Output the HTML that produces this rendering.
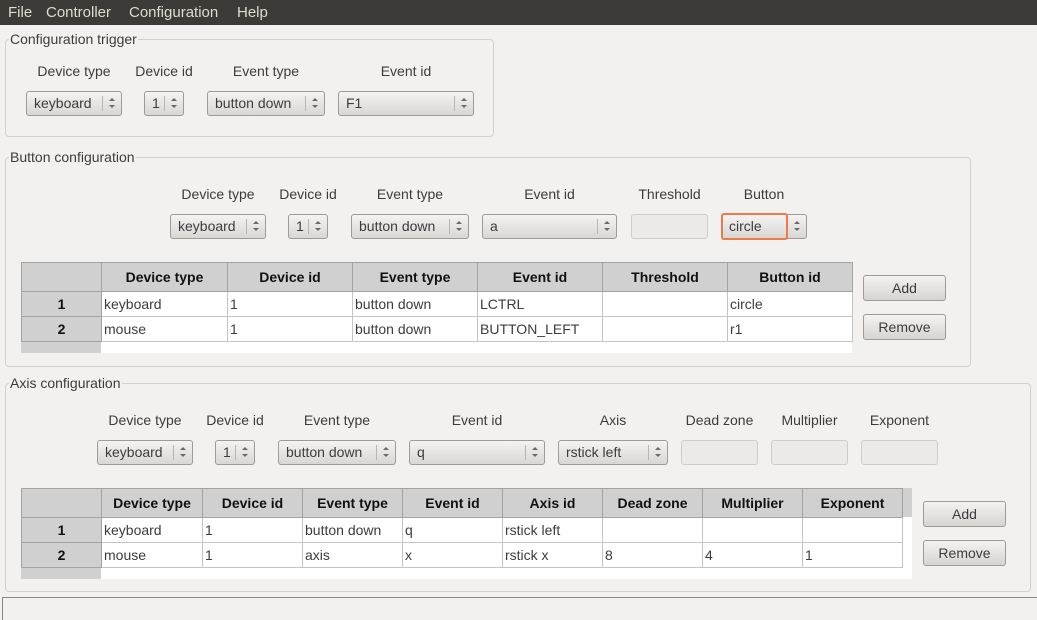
<!DOCTYPE html>
<html><head><meta charset="utf-8"><style>
*{box-sizing:border-box;margin:0;padding:0}
body{width:1037px;height:620px;background:#f2f1f0;font-family:"Liberation Sans",sans-serif;font-size:14px;color:#3c3c3c;position:relative;overflow:hidden}
.a{position:absolute}
.menu{left:0;top:0;width:1037px;height:25px;background:#3c3b37;color:#dfdbd2;font-size:15px}
.menu span{position:absolute;top:4px}
.grp{border:1px solid #d3d0cc;border-radius:4px}
.gt{background:#f2f1f0;padding:0 1px;line-height:16px}
.lbl{text-align:center;line-height:16px}
.cb{height:25px;border:1px solid #9e9b97;border-radius:3px;background:linear-gradient(#f4f3f2,#d9d7d4);line-height:23px;padding-left:7px;white-space:nowrap}
.cb i{position:absolute;right:0;top:4px;width:19px;height:15px;border-left:1px solid #b8b5b1}
.cb i:before{content:"";position:absolute;left:6px;top:2px;border:3px solid transparent;border-bottom:3px solid #6b6966;border-top:0}
.cb i:after{content:"";position:absolute;left:6px;top:9px;border:3px solid transparent;border-top:3px solid #6b6966;border-bottom:0}
.inp{height:25px;border:1px solid #d0cdc9;border-radius:3px;background:#ebeae8}
.btn{height:26px;border:1px solid #9e9b97;border-radius:3px;background:linear-gradient(#f4f3f2,#d6d4d1);text-align:center;line-height:24px}
table{position:absolute;border-collapse:collapse;table-layout:fixed;background:#fff}
td,th{border:1px solid #c4c4c4;height:25px;padding:0 2px;text-align:left;font-weight:normal;white-space:nowrap;overflow:hidden}
th{background:#d0d0d0;border-color:#a3a3a3;font-weight:bold;text-align:center;color:#111;height:29px}
td.rh{background:#d0d0d0;border-color:#a3a3a3;font-weight:bold;text-align:center;color:#111}
</style></head><body>
<div class="a menu"><span style="left:8px">File</span><span style="left:46px">Controller</span><span style="left:129px">Configuration</span><span style="left:237px">Help</span></div>

<div class="a grp" style="left:5px;top:39px;width:489px;height:98px"></div>
<div class="a gt" style="left:9px;top:31px">Configuration trigger</div>
<div class="a lbl" style="left:26px;top:63px;width:96px">Device type</div>
<div class="a lbl" style="left:128px;top:63px;width:72px">Device id</div>
<div class="a lbl" style="left:207px;top:63px;width:118px">Event type</div>
<div class="a lbl" style="left:338px;top:63px;width:136px">Event id</div>
<div class="a cb" style="left:26px;top:91px;width:96px">keyboard<i></i></div>
<div class="a cb" style="left:144px;top:91px;width:40px">1<i></i></div>
<div class="a cb" style="left:207px;top:91px;width:118px">button down<i></i></div>
<div class="a cb" style="left:338px;top:91px;width:136px">F1<i></i></div>

<div class="a grp" style="left:5px;top:157px;width:966px;height:210px"></div>
<div class="a gt" style="left:9px;top:149px">Button configuration</div>
<div class="a lbl" style="left:170px;top:186px;width:96px">Device type</div>
<div class="a lbl" style="left:272px;top:186px;width:72px">Device id</div>
<div class="a lbl" style="left:351px;top:186px;width:118px">Event type</div>
<div class="a lbl" style="left:482px;top:186px;width:135px">Event id</div>
<div class="a lbl" style="left:631px;top:186px;width:77px">Threshold</div>
<div class="a lbl" style="left:721px;top:186px;width:86px">Button</div>
<div class="a cb" style="left:170px;top:214px;width:96px">keyboard<i></i></div>
<div class="a cb" style="left:288px;top:214px;width:40px">1<i></i></div>
<div class="a cb" style="left:351px;top:214px;width:118px">button down<i></i></div>
<div class="a cb" style="left:482px;top:214px;width:135px">a<i></i></div>
<div class="a inp" style="left:631px;top:214px;width:77px"></div>
<div class="a cb" style="left:721px;top:214px;width:86px">circle<i></i></div>
<div class="a" style="left:721px;top:213px;width:67px;height:27px;border:2px solid #ee7a4c;border-radius:3px"></div>
<div class="a" style="left:21px;top:262px;width:831px;height:91px;background:#fff"></div>
<div class="a" style="left:21px;top:342px;width:80px;height:11px;background:#d0d0d0"></div>
<table style="left:21px;top:262px;width:831px">
<colgroup><col style="width:80px"><col style="width:126px"><col style="width:125px"><col style="width:125px"><col style="width:125px"><col style="width:125px"><col style="width:125px"></colgroup>
<tr><th></th><th>Device type</th><th>Device id</th><th>Event type</th><th>Event id</th><th>Threshold</th><th>Button id</th></tr>
<tr><td class="rh">1</td><td>keyboard</td><td>1</td><td>button down</td><td>LCTRL</td><td></td><td>circle</td></tr>
<tr><td class="rh">2</td><td>mouse</td><td>1</td><td>button down</td><td>BUTTON_LEFT</td><td></td><td>r1</td></tr>
</table>
<div class="a btn" style="left:863px;top:275px;width:83px">Add</div>
<div class="a btn" style="left:863px;top:314px;width:83px">Remove</div>

<div class="a grp" style="left:5px;top:383px;width:1026px;height:209px"></div>
<div class="a gt" style="left:9px;top:375px">Axis configuration</div>
<div class="a lbl" style="left:97px;top:412px;width:96px">Device type</div>
<div class="a lbl" style="left:199px;top:412px;width:72px">Device id</div>
<div class="a lbl" style="left:278px;top:412px;width:118px">Event type</div>
<div class="a lbl" style="left:409px;top:412px;width:136px">Event id</div>
<div class="a lbl" style="left:558px;top:412px;width:110px">Axis</div>
<div class="a lbl" style="left:681px;top:412px;width:77px">Dead zone</div>
<div class="a lbl" style="left:771px;top:412px;width:77px">Multiplier</div>
<div class="a lbl" style="left:861px;top:412px;width:77px">Exponent</div>
<div class="a cb" style="left:97px;top:440px;width:96px">keyboard<i></i></div>
<div class="a cb" style="left:215px;top:440px;width:40px">1<i></i></div>
<div class="a cb" style="left:278px;top:440px;width:118px">button down<i></i></div>
<div class="a cb" style="left:409px;top:440px;width:136px">q<i></i></div>
<div class="a cb" style="left:558px;top:440px;width:110px">rstick left<i></i></div>
<div class="a inp" style="left:681px;top:440px;width:77px"></div>
<div class="a inp" style="left:771px;top:440px;width:77px"></div>
<div class="a inp" style="left:861px;top:440px;width:77px"></div>
<div class="a" style="left:21px;top:488px;width:891px;height:91px;background:#fff"></div>
<div class="a" style="left:21px;top:488px;width:891px;height:29px;background:#d0d0d0"></div>
<div class="a" style="left:21px;top:567px;width:80px;height:12px;background:#d0d0d0"></div>
<table style="left:21px;top:488px;width:881px">
<colgroup><col style="width:80px"><col style="width:101px"><col style="width:100px"><col style="width:100px"><col style="width:100px"><col style="width:100px"><col style="width:100px"><col style="width:100px"><col style="width:100px"></colgroup>
<tr><th></th><th>Device type</th><th>Device id</th><th>Event type</th><th>Event id</th><th>Axis id</th><th>Dead zone</th><th>Multiplier</th><th>Exponent</th></tr>
<tr><td class="rh">1</td><td>keyboard</td><td>1</td><td>button down</td><td>q</td><td>rstick left</td><td></td><td></td><td></td></tr>
<tr><td class="rh">2</td><td>mouse</td><td>1</td><td>axis</td><td>x</td><td>rstick x</td><td>8</td><td>4</td><td>1</td></tr>
</table>
<div class="a btn" style="left:923px;top:501px;width:83px">Add</div>
<div class="a btn" style="left:923px;top:540px;width:83px">Remove</div>

<div class="a" style="left:2px;top:597px;width:1035px;height:23px;border-top:1px solid #8a8885;border-left:1px solid #8a8885"></div>
</body></html>
